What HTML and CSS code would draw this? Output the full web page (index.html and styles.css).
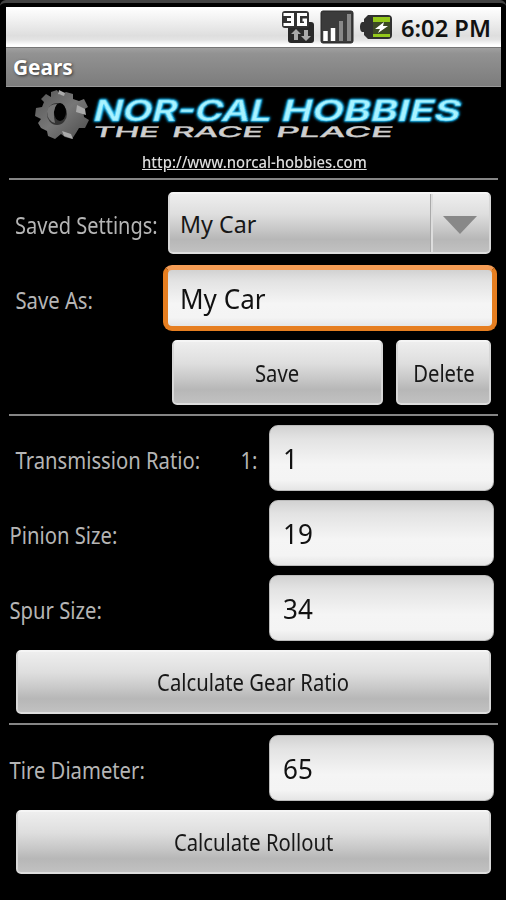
FILE: index.html
```html
<!DOCTYPE html>
<html lang="en">
<head>
<meta charset="utf-8">
<title>Gears</title>
<link rel="stylesheet" href="styles.css">
</head>
<body>
<div class="phone">
  <header class="status">
    <svg class="net" width="34" height="34" viewBox="0 0 34 34">
      <rect x="7" y="12" width="26" height="21" rx="3" fill="#292929"/>
      <rect x="1" y="1" width="27" height="17" rx="3" fill="#333"/>
      <path d="M2.500 4.500H11.500V14.500H2.500M6 9.500H11M26 4.500H17.500V14.500H24.500V10H21.500" fill="none" stroke="#fff" stroke-width="3"/>
      <path d="M15 19L20 24H17V30H13V24H10ZM25 31L20 26H23V20H27V26H30Z" fill="#aaa"/>
    </svg>
    <svg class="signal" width="34" height="34" viewBox="0 0 34 34">
      <rect x="1" y="1" width="32" height="32" rx="2" fill="#3b3b3b" stroke="#292929"/>
      <path d="M5.500 31V21M13 31V18" stroke="#fff" stroke-width="4.500"/>
      <path d="M21 31V11M29 31V4" stroke="#888" stroke-width="4"/>
    </svg>
    <svg class="battery" width="34" height="26" viewBox="0 0 34 26">
      <path d="M9 1H29Q33 1 33 5V21Q33 25 29 25H9L5 21V18H3Q1 17 1 13T3 8H5V5Z" fill="#303030"/>
      <path d="M14 3H31V8H14ZM14 20H31V23H14Z" fill="#94c91b"/>
      <path d="M14 8H31V20H14Z" fill="#3d4a24"/>
      <path d="M25 8L16 15H21L19 19L29 12H24Z" fill="#fff"/>
    </svg>
    <span class="clock">6:02 PM</span>
  </header>
  <div class="title"><span>Gears</span></div>
  <main>
    <div class="brand">
      <svg class="logo" width="440" height="60" viewBox="0 0 440 60">
        <defs>
          <linearGradient id="metal" x1="0" y1="0" x2="1" y2="1"><stop offset="0" stop-color="#555"/><stop offset=".5" stop-color="#777"/><stop offset="1" stop-color="#4b4b4b"/></linearGradient>
        </defs>
        <path d="M16 5L22 3L25 8L31 5L38 7L38 12L44 14L49 12L53 20L48 23L49 30L54 33L50 41L44 41L41 46L37 52L30 50L26 47L20 52L13 49L12 44L6 41L3 36L6 32L0 29L1 21L7 20L9 15L6 12L11 7L16 10Z" fill="url(#metal)"/>
        <ellipse cx="22" cy="27" rx="10" ry="11" fill="#343434"/>
        <ellipse cx="25" cy="25" rx="6" ry="9" fill="#020202"/>
        <path d="M12 24Q14 17 22 17Q17 23 20 36Q12 34 12 24Z" fill="#767676"/>
        <path d="M24 3L30 6L29 9L23 7ZM42 18L50 22L51 28L41 25ZM27 44L36 47L38 52L29 49Z" fill="#aaa"/>
        <g class="name" transform="translate(57 34) skewX(-14)">
          <text textLength="178" lengthAdjust="spacingAndGlyphs">NOR-CAL</text>
          <text x="188" textLength="179" lengthAdjust="spacingAndGlyphs">HOBBIES</text>
        </g>
        <g class="tagline" transform="translate(57 50) skewX(-14)">
          <text textLength="66" lengthAdjust="spacingAndGlyphs">THE</text>
          <text x="79" textLength="91" lengthAdjust="spacingAndGlyphs">RACE</text>
          <text x="183" textLength="117" lengthAdjust="spacingAndGlyphs">PLACE</text>
        </g>
      </svg>
      <a class="link"><span>http://www.norcal-hobbies.com</span></a>
    </div>
    <hr>
    <section class="settings">
      <div class="row saved"><label><span>Saved Settings:</span></label><div class="button spinner"><span>My Car</span><i><b></b></i></div></div>
      <div class="row save-as"><label><span>Save As:</span></label><div class="field focused"><span>My Car</span></div></div>
      <div class="row actions"><div class="button save"><span>Save</span></div><div class="button delete"><span>Delete</span></div></div>
    </section>
    <hr>
    <section class="gears">
      <div class="row inset"><label><span>Transmission Ratio:</span></label><label class="prefix"><span>1:</span></label><div class="field"><span>1</span></div></div>
      <div class="row"><label><span>Pinion Size:</span></label><div class="field"><span>19</span></div></div>
      <div class="row"><label><span>Spur Size:</span></label><div class="field"><span>34</span></div></div>
      <div class="button wide"><span>Calculate Gear Ratio</span></div>
    </section>
    <hr>
    <section class="tire">
      <div class="row"><label><span>Tire Diameter:</span></label><div class="field"><span>65</span></div></div>
      <div class="button wide"><span>Calculate Rollout</span></div>
    </section>
  </main>
</div>
</body>
</html>
```

FILE: styles.css
```css
* { box-sizing: border-box; }
body { margin: 0; background: #000; font-family: "Noto Sans", "Open Sans", sans-serif; }
.phone { width: 506px; height: 900px; padding: 4px 5px 0 6px; border-top: 3px solid #424242; border-radius: 6px 6px 0 0; overflow: hidden; background: #000; }
span { display: inline-block; white-space: nowrap; }
.status { height: 40px; display: flex; align-items: center; justify-content: flex-end; padding-right: 10px; background: linear-gradient(#fff, #f2f2f2 30%, #dedede 72%, #e4e4e4 82%, #fff 95%); }
.signal { margin-left: 5px; }
.battery { margin-left: 5px; }
.clock { width: 90px; margin-left: 8px; font-size: 23px; font-weight: 600; color: #111; transform-origin: left; transform: translateY(1px) scaleX(1.03); }
.title { height: 40px; display: flex; align-items: center; padding-left: 7px; background: linear-gradient(#a0a0a0, #929292 15%, #7c7c7c); border-top: 1px solid #777; border-bottom: 1px solid #999; color: #fff; font-size: 21.500px; font-weight: 700; text-shadow: 1px 1px 3px #333; }
.title span { transform-origin: left; transform: translateY(-1px) scaleX(.97); }
main { padding: 0 3px; }
.brand { height: 91px; display: flex; flex-direction: column; }
.logo { display: block; margin-left: 26px; flex: none; }
.name { font: 600 29px Inter, "DejaVu Sans", sans-serif; fill: #a9f3ff; stroke: #35bcec; stroke-width: .6px; filter: drop-shadow(0 0 1px #09a9e9) drop-shadow(0 0 1px #0789bd); }
.tagline { font: 500 14.500px Inter, "DejaVu Sans", sans-serif; fill: #d0d0d0; stroke: #c9c9c9; stroke-width: .3px; }
.link { width: 224px; height: 22px; margin: 5px 0 0 133px; color: #ddd; font-size: 16.500px; line-height: 20px; font-weight: 500; }
.link span { transform-origin: left; transform: scaleX(.9); text-decoration: underline; }
hr { height: 2px; margin: 0; border: 0; background: #858585; }
.row { display: flex; align-items: center; height: 65px; }
label { flex: 1; color: #b5b5b5; font-size: 23px; line-height: 32px; }
.row label { padding-top: 3px; }
label span { transform-origin: left; transform: translateX(.5px) scaleX(.88); }
.button { display: flex; align-items: center; justify-content: center; height: 65px; border: 2px solid; border-color: #f5f5f5 #d7d7d7 #ddd; border-radius: 5px; background: linear-gradient(#eee, #dedede 35%, #c8c8c8 60%, #b7b7b7 78%, #c1c1c1); font-size: 23px; color: #171717; }
.button > span { transform: scaleX(.88); }
.field { display: flex; align-items: center; flex: none; width: 225px; height: 66px; padding-left: 13px; border: 1px solid #bbb; border-radius: 9px; background: linear-gradient(#d2d2d2, #e3e3e3 20%, #f5f5f5 60%, #f4f4f4 85%, #e5e5e5); font-size: 28px; color: #111; }
.field span { transform-origin: left; transform: scaleX(.93); }
.settings { height: 234px; padding: 12px 7px 0 6px; }
.saved { height: 62px; }
.saved label, .save-as label { flex: 1 1 0; min-width: 0; }
.saved label span { transform: scaleX(.87); }
.spinner { flex: none; width: 323px; height: 62px; justify-content: flex-start; padding-left: 10px; }
.spinner > span { flex: 1; transform-origin: left; transform: translateY(1px) scaleX(1.01); }
.spinner i { flex: none; display: flex; align-items: center; justify-content: center; width: 59px; height: 58px; border-left: 1px solid #aaa; box-shadow: inset 2px 0 #ddd; }
.spinner b { margin-top: 4px; border: 17px solid transparent; border-top: 18px solid #888; border-bottom: 0; }
.save-as { height: 66px; margin: 11px -6px 0 0; }
.focused { width: 334px; border: 5px solid #e67e20; border-top-color: #f49c55; padding-left: 12px; }
.actions { gap: 13px; margin-top: 9px; justify-content: flex-end; }
.save { width: 211px; }
.delete { width: 95px; }
.gears { height: 307px; padding: 9px 4px 0 0; }
.gears .row { margin-bottom: 9px; height: 66px; }
.inset { padding-left: 6px; }
.row .prefix { flex: 0 0 29px; }
.wide { width: 475px; margin: 0 0 0 7px; height: 64px; }
.tire { padding: 10px 4px 0 0; }
.tire .row { height: 66px; margin-bottom: 9px; }
```
